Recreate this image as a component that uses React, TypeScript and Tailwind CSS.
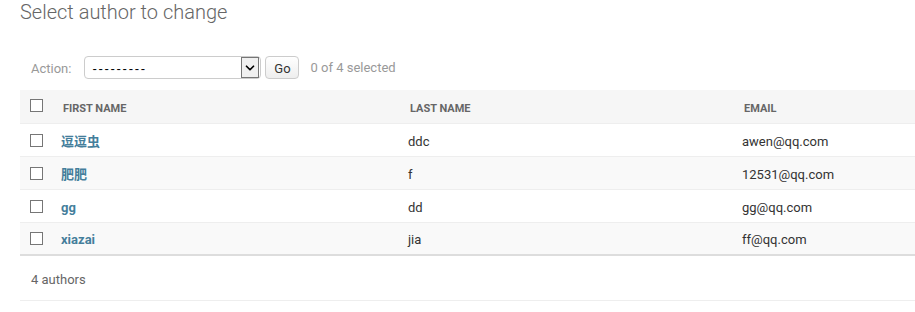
import { ChevronDown } from 'lucide-react';

const authors = [
  { first: '逗逗虫', last: 'ddc', email: 'awen@qq.com' },
  { first: '肥肥', last: 'f', email: '12531@qq.com' },
  { first: 'gg', last: 'dd', email: 'gg@qq.com' },
  { first: 'xiazai', last: 'jia', email: 'ff@qq.com' },
];

const font = { fontFamily: 'Roboto, "Noto Sans CJK SC", sans-serif' };

function Box() {
  return <span className="block w-[13px] h-[13px] border border-[#767676] bg-white" />;
}

export default function App() {
  return (
    <div className="w-[915px] h-[312px] bg-white pl-[20px] overflow-hidden text-[#333]" style={font}>
      {/* Title */}
      <h1 className="text-[20px] leading-[24px] font-light text-[#666]">Select author to change</h1>

      {/* Actions */}
      <div className="flex items-center mt-[32px] h-[23px] text-[13px]">
        <span className="ml-[11px] pt-[2px] text-[#999]">Action:</span>
        <div className="ml-[13px] w-[177px] h-[23px] flex items-center border border-[#ccc] rounded-[4px] bg-white pl-[7px] pr-[1px]">
          <span className="flex-1 pt-[2px] text-black tracking-[1.7px] font-['Liberation_Sans',sans-serif]">---------</span>
          <span className="w-[18px] h-[21px] flex items-center justify-center border border-[#767676] bg-[#f0f0f0]">
            <ChevronDown className="w-[14px] h-[14px] text-black" strokeWidth={3} />
          </span>
        </div>
        <button className="ml-[4px] h-[23px] w-[34px] pt-[2px] border border-[#ccc] rounded-[4px] bg-gradient-to-b from-white to-[#eee] text-[#333] text-[13px]">
          Go
        </button>
        <span className="ml-[11px] text-[#999]">0 of 4 selected</span>
      </div>

      {/* Table */}
      <div className="mt-[11px]">
        <div className="grid grid-cols-[31px_347px_334px_1fr] h-[34px] items-start bg-[#f6f6f6] border-b border-[#eee] text-[11px] leading-[13px] font-bold uppercase text-[#666]">
          <div className="pl-[10px] pt-[9px]">
            <Box />
          </div>
          <div className="pl-[12px] pt-[12px]">First name</div>
          <div className="pl-[12px] pt-[12px]">Last name</div>
          <div className="pl-[12px] pt-[12px]">Email</div>
        </div>
        {authors.map((a, i) => (
          <div
            key={a.email}
            className={`grid grid-cols-[31px_347px_334px_1fr] h-[33px] items-center border-b text-[13px] ${
              i % 2 === 1 ? 'bg-[#f9f9f9]' : 'bg-white'
            } ${i === authors.length - 1 ? 'border-[#ddd] border-b-2' : 'border-[#eee]'}`}
          >
            <div className="pl-[10px]">
              <Box />
            </div>
            <div className="pl-[10px] pt-[3px] font-bold text-[#447e9b]">{a.first}</div>
            <div className="pl-[10px] pt-[3px]">{a.last}</div>
            <div className="pl-[10px] pt-[3px]">{a.email}</div>
          </div>
        ))}
        <div className="h-[45px] flex items-center pl-[11px] pt-[4px] text-[13px] text-[#666] border-b border-[#eee]">4 authors</div>
      </div>
    </div>
  );
}
